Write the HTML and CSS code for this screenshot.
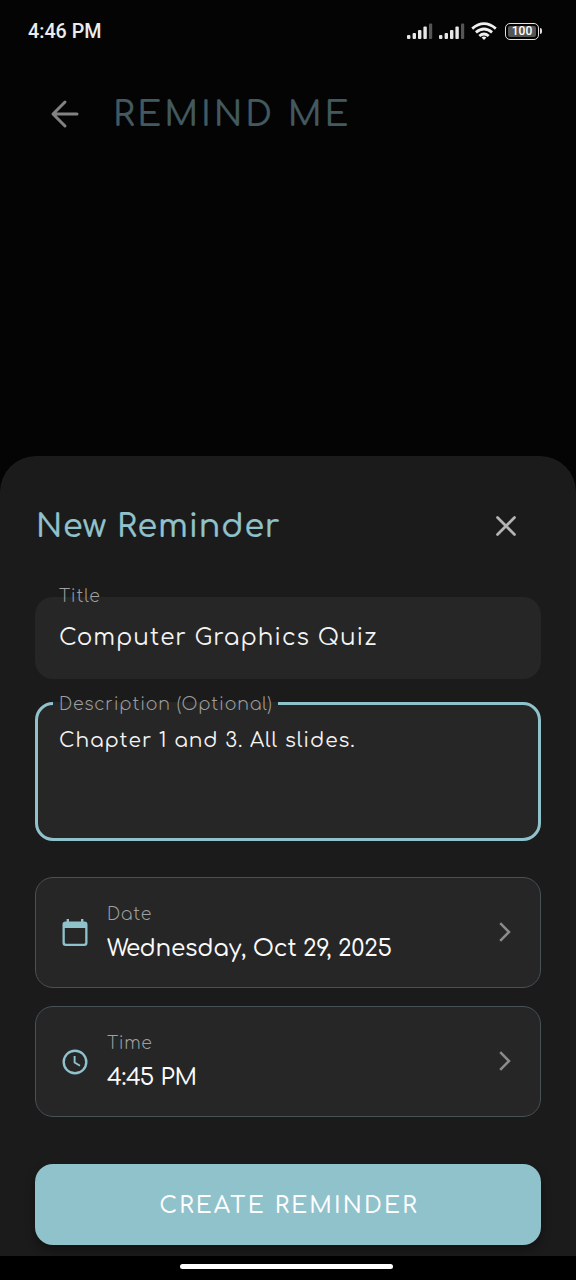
FILE: index.html
```html
<!DOCTYPE html>
<html lang="en">
<head>
<meta charset="utf-8">
<title>Remind Me</title>
<link rel="stylesheet" href="styles.css">
</head>
<body>
<div class="screen">
  <div class="status">
    <span class="clock">4:46 PM</span>
    <div class="indicators">
      <svg class="signal" width="26" height="17" viewBox="0 0 26 17"><g fill="#e6e6e6"><rect x="0" y="12" width="3.4" height="4" rx="1"/><rect x="5.6" y="10" width="3.4" height="6" rx="1"/><rect x="11" y="7" width="3.4" height="9" rx="1"/><rect x="16.4" y="3.5" width="3.4" height="12.5" rx="1"/></g><rect x="22" y="0.5" width="3.2" height="15.5" rx="1" fill="#555"/></svg>
      <svg class="signal" width="26" height="17" viewBox="0 0 26 17"><g fill="#e6e6e6"><rect x="0" y="12" width="3.4" height="4" rx="1"/><rect x="5.6" y="10" width="3.4" height="6" rx="1"/><rect x="11" y="7" width="3.4" height="9" rx="1"/><rect x="16.4" y="3.5" width="3.4" height="12.5" rx="1"/></g><rect x="22" y="0.5" width="3.2" height="15.5" rx="1" fill="#555"/></svg>
      <svg class="wifi" width="26" height="19" viewBox="0 0 26 19" fill="none" stroke="#f0f0f0" stroke-width="2.7"><path d="M1.2 6.6Q13 -3.4 24.8 6.6"/><path d="M4.9 10.4Q13 3.6 21.1 10.4"/><path d="M8.3 14Q13 10 17.7 14"/><path d="M10.6 15.6Q13 13.6 15.4 15.6L13 18Z" fill="#f0f0f0" stroke="none"/></svg>
      <div class="battery"><span class="level">100</span></div>
    </div>
  </div>
  <div class="appbar">
    <svg width="30" height="30" viewBox="0 0 30 30" fill="none" stroke="#828282" stroke-width="3" stroke-linecap="round" stroke-linejoin="round"><path d="M27 15H3.5M15 3L3 15L15 27"/></svg>
    <h1 class="app-title">REMIND ME</h1>
  </div>
  <main class="sheet">
    <div class="sheet-head">
      <h2 class="sheet-title">New Reminder</h2>
      <svg width="20" height="20" viewBox="0 0 20 20" fill="none" stroke="#b4b4b4" stroke-width="2.7" stroke-linecap="round"><path d="M1.5 1.5L18.5 18.5M18.5 1.5L1.5 18.5"/></svg>
    </div>
    <fieldset class="field title-field">
      <legend><span class="label field-label">Title</span></legend>
      <div class="title-value">Computer Graphics Quiz</div>
    </fieldset>
    <fieldset class="field desc-field">
      <legend><span class="label field-label">Description (Optional)</span></legend>
      <div class="desc-value">Chapter 1 and 3. All slides.</div>
    </fieldset>
    <div class="pickers">
      <div class="picker">
        <svg class="picker-icon" width="26" height="28" viewBox="0 0 26 28"><path fill="#90c2cc" fill-rule="evenodd" d="M4.6 0H7V2.6H19V0H21.400V2.600H22.500Q25.500 2.600 25.500 5.600V24Q25.500 27 22.500 27H3.500Q.5 27 .5 24V5.600Q.5 2.600 3.500 2.600H4.600ZM2.800 9V23.600Q2.800 24.700 3.900 24.700H22.100Q23.200 24.700 23.200 23.600V9Z"/></svg>
        <div class="picker-text"><span class="label">Date</span><span class="value">Wednesday, Oct 29, 2025</span></div>
        <svg class="chevron" width="12" height="20" viewBox="0 0 12 20" fill="none" stroke="#8b8b8b" stroke-width="2.5"><path d="M1.200 1.200L10 10L1.200 18.800"/></svg>
      </div>
      <div class="picker">
        <svg class="picker-icon" width="26" height="28" viewBox="0 0 26 28" fill="none" stroke="#90c2cc"><circle cx="13" cy="14" r="11.300" stroke-width="2.400"/><path d="M12.600 8V14.500L18 17.800" stroke-width="1.900"/></svg>
        <div class="picker-text"><span class="label">Time</span><span class="value">4:45 PM</span></div>
        <svg class="chevron" width="12" height="20" viewBox="0 0 12 20" fill="none" stroke="#8b8b8b" stroke-width="2.5"><path d="M1.200 1.200L10 10L1.200 18.800"/></svg>
      </div>
    </div>
    <button class="create">CREATE REMINDER</button>
  </main>
  <div class="navbar"><div class="pill"></div></div>
</div>
</body>
</html>
```
FILE: styles.css
```css
* { box-sizing: border-box; }
body { margin: 0; background: #040404; font-family: Comfortaa, Quicksand, Lato, "Open Sans", sans-serif; }
svg { display: block; flex: none; }
h1, h2 { margin: 0; font-weight: 500; white-space: nowrap; -webkit-text-stroke: .2px currentColor; }
.screen { width: 576px; height: 1280px; display: flex; flex-direction: column; background: #040404; overflow: hidden; }
.status { height: 62px; padding: 0 34px 0 28px; display: flex; align-items: center; justify-content: space-between; }
.clock { padding-top: 1px; font: 500 19.7px/24px Roboto, sans-serif; color: #ececec; }
.indicators { display: flex; align-items: center; }
.signal { margin-right: 6px; }
.wifi { margin: 0 8px 0 0; }
.battery { width: 34px; height: 17px; padding: 2px; margin-right: 3px; border: 1.5px solid #e0e0e0; border-radius: 5px; position: relative; }
.battery::after { content: ""; position: absolute; right: -4px; top: 4px; width: 2px; height: 6px; border-radius: 0 2px 2px 0; background: #ddd; }
.level { display: block; height: 11px; background: #555; border-radius: 2px; color: #fff; text-align: center; font: 500 12px/11px Roboto, sans-serif; }
.appbar { height: 394px; padding: 37px 0 0 50px; display: flex; align-items: flex-start; gap: 33px; }
.app-title { font-size: 34.56px; line-height: 32px; letter-spacing: 2.88px; color: #425a5f; }
.sheet { height: 800px; padding: 44px 35px 0; border-radius: 36px 36px 0 0; background: #1b1b1b; }
.sheet-head { height: 52px; padding: 0 25px 0 1px; display: flex; align-items: center; justify-content: space-between; }
.sheet-title { padding-top: 1px; font-size: 31.68px; line-height: 40px; letter-spacing: .85px; color: #90c2cc; }
.field { display: block; min-width: 0; margin: 0; border-radius: 18px; background: #262626; }
.field legend { line-height: 19px; padding: 0 6px; }
.label { display: block; font-size: 17.28px; line-height: 19px; font-weight: 300; letter-spacing: .8px; color: #a0a0a0; white-space: nowrap; }
.picker .label { letter-spacing: .66px; }
.field-label { height: 19px; line-height: 21px; }
.title-field { height: 93px; margin-top: 34px; padding: 0 18px; border: 0; }
.title-field legend { padding-bottom: 3px; }
.title-value { padding: 15px 6px 0; font-size: 23.04px; line-height: 30px; letter-spacing: .98px; color: #f4f4f4; }
.desc-field { height: 147px; margin-top: 15px; padding: 0 15px; border: 3px solid #90c2cc; }
.desc-field legend { padding-right: 5px; }
.desc-value { padding: 15px 6px 0; font-size: 20.16px; line-height: 26px; letter-spacing: .9px; color: #f4f4f4; }
.pickers { margin-top: 36px; display: grid; gap: 18px; }
.picker { height: 111px; padding: 0 29px 0 26px; border: 1.5px solid #465256; border-radius: 18px; background: #262626; display: flex; align-items: center; }
.picker-text { flex: 1; margin-left: 19px; padding-top: 7px; display: flex; flex-direction: column; gap: 6px; }
.value { font-size: 23.04px; line-height: 38px; font-weight: 500; letter-spacing: -.18px; color: #fafafa; white-space: nowrap; }
.chevron { margin-bottom: 1px; }
.create { display: block; width: 100%; height: 81px; margin-top: 47px; padding: 3px 0 0 2px; border: 0; border-radius: 18px; background: #90c2cc; box-shadow: 0 5px 10px rgba(0, 0, 0, .35); color: #fff; font: 500 23.04px/30px Comfortaa, Quicksand, Lato, sans-serif; letter-spacing: 2.16px; }
.navbar { height: 24px; padding: 8px 3px 0 0; background: #000; }
.pill { width: 213px; height: 5px; margin: 0 auto; border-radius: 3px; background: #fff; }
```
